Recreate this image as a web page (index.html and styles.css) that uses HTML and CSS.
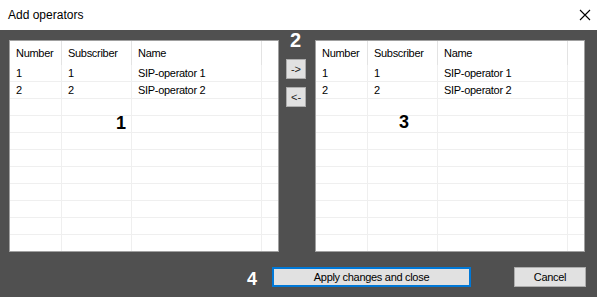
FILE: index.html
```html
<!DOCTYPE html>
<html>
<head>
  <title>Add operators</title>
  <link rel="stylesheet" href="styles.css">
</head>
<body>

  <div class="dialog">
    <div class="titlebar">
      <span class="title">Add operators</span>
      <svg class="close" width="12" height="12" viewBox="0 0 12 12">
        <path d="M1 1 L11 11 M11 1 L1 11" stroke="#000" stroke-width="1.1" fill="none"/>
      </svg>
    </div>

    <div class="content">
      <div class="panes">
        <div class="list">
          <table>
            <thead>
              <tr><th class="c-num">Number</th><th class="c-sub">Subscriber</th><th class="c-name">Name</th><th class="c-end"></th></tr>
            </thead>
            <tbody>
              <tr><td>1</td><td>1</td><td>SIP-operator 1</td><td></td></tr>
              <tr><td>2</td><td>2</td><td>SIP-operator 2</td><td></td></tr>
              <tr><td></td><td></td><td></td><td></td></tr>
              <tr><td></td><td></td><td></td><td></td></tr>
              <tr><td></td><td></td><td></td><td></td></tr>
              <tr><td></td><td></td><td></td><td></td></tr>
              <tr><td></td><td></td><td></td><td></td></tr>
              <tr><td></td><td></td><td></td><td></td></tr>
              <tr><td></td><td></td><td></td><td></td></tr>
              <tr><td></td><td></td><td></td><td></td></tr>
              <tr><td></td><td></td><td></td><td></td></tr>
            </tbody>
          </table>
        </div>

        <div class="mover">
          <button class="move-btn">-&gt;</button>
          <button class="move-btn">&lt;-</button>
        </div>

        <div class="list">
          <table>
            <thead>
              <tr><th class="c-num">Number</th><th class="c-sub">Subscriber</th><th class="c-name">Name</th><th class="c-end"></th></tr>
            </thead>
            <tbody>
              <tr><td>1</td><td>1</td><td>SIP-operator 1</td><td></td></tr>
              <tr><td>2</td><td>2</td><td>SIP-operator 2</td><td></td></tr>
              <tr><td></td><td></td><td></td><td></td></tr>
              <tr><td></td><td></td><td></td><td></td></tr>
              <tr><td></td><td></td><td></td><td></td></tr>
              <tr><td></td><td></td><td></td><td></td></tr>
              <tr><td></td><td></td><td></td><td></td></tr>
              <tr><td></td><td></td><td></td><td></td></tr>
              <tr><td></td><td></td><td></td><td></td></tr>
              <tr><td></td><td></td><td></td><td></td></tr>
              <tr><td></td><td></td><td></td><td></td></tr>
            </tbody>
          </table>
        </div>
      </div>

      <div class="footer">
        <button class="btn btn-apply">Apply changes and close</button>
        <button class="btn btn-cancel">Cancel</button>
      </div>
    </div>

    <span class="mark mark-1">1</span>
    <span class="mark mark-2">2</span>
    <span class="mark mark-3">3</span>
    <span class="mark mark-4">4</span>
  </div>

</body>
</html>
```

FILE: styles.css
```css
* {
  box-sizing: border-box;
}
body {
  margin: 0;
  font-family: "Liberation Sans", Arial, sans-serif;
  font-size: 11px;
  color: #000;
}
.dialog {
  position: relative;
  width: 597px;
  height: 297px;
  overflow: hidden;
}
.titlebar {
  height: 30px;
  background: #fff;
  display: flex;
  align-items: center;
  justify-content: space-between;
  padding: 0 6px 0 8px;
}
.title {
  font-size: 12px;
}
.close {
  display: block;
}
.content {
  height: 267px;
  background: #505050;
  padding-top: 10px;
}
.panes {
  display: flex;
  align-items: flex-start;
  padding-left: 9px;
}
.list {
  width: 270px;
  height: 212px;
  background: #fff;
  border: 1px solid #a0a0a0;
  overflow: hidden;
}
.list table {
  width: 100%;
  table-layout: fixed;
  border-spacing: 0;
  letter-spacing: -0.3px;
}
.list th {
  height: 24px;
  font-weight: normal;
  text-align: left;
  padding: 0 0 0 6px;
  border-right: 1px solid #e3e3e3;
}
.list td {
  height: 17px;
  padding: 0 0 0 6px;
  border-right: 1px solid #efefef;
  border-bottom: 1px solid #efefef;
  white-space: nowrap;
}
.list th:last-child,
.list td:last-child {
  border-right: none;
}
.c-num {
  width: 52px;
}
.c-sub {
  width: 70px;
}
.c-name {
  width: 130px;
}
.mover {
  width: 36px;
  display: flex;
  flex-direction: column;
  gap: 8px;
  padding: 19px 0 0 7px;
}
.move-btn {
  width: 20px;
  height: 20px;
  padding: 0;
  background: #e1e1e1;
  border: 1px solid #adadad;
  font-family: "Liberation Sans", Arial, sans-serif;
  font-size: 11px;
  color: #222;
}
.footer {
  display: flex;
  justify-content: flex-end;
  gap: 43px;
  margin-top: 15px;
  padding-right: 11px;
}
.btn {
  height: 20px;
  padding: 0;
  background: #e1e1e1;
  border: 1px solid #adadad;
  font-family: "Liberation Sans", Arial, sans-serif;
  font-size: 11px;
  letter-spacing: -0.3px;
  color: #000;
}
.btn-apply {
  width: 199px;
  border: 2px solid #0078d7;
}
.btn-cancel {
  width: 72px;
}
.mark {
  position: absolute;
  font-family: "Liberation Sans", Arial, sans-serif;
  font-weight: bold;
  font-size: 18px;
  line-height: 18px;
}
.mark-1 {
  left: 116px;
  top: 114px;
}
.mark-2 {
  left: 290px;
  top: 30px;
  font-size: 20px;
  line-height: 20px;
  color: #fff;
}
.mark-3 {
  left: 399px;
  top: 113px;
}
.mark-4 {
  left: 247px;
  top: 270px;
  color: #fff;
}
```
